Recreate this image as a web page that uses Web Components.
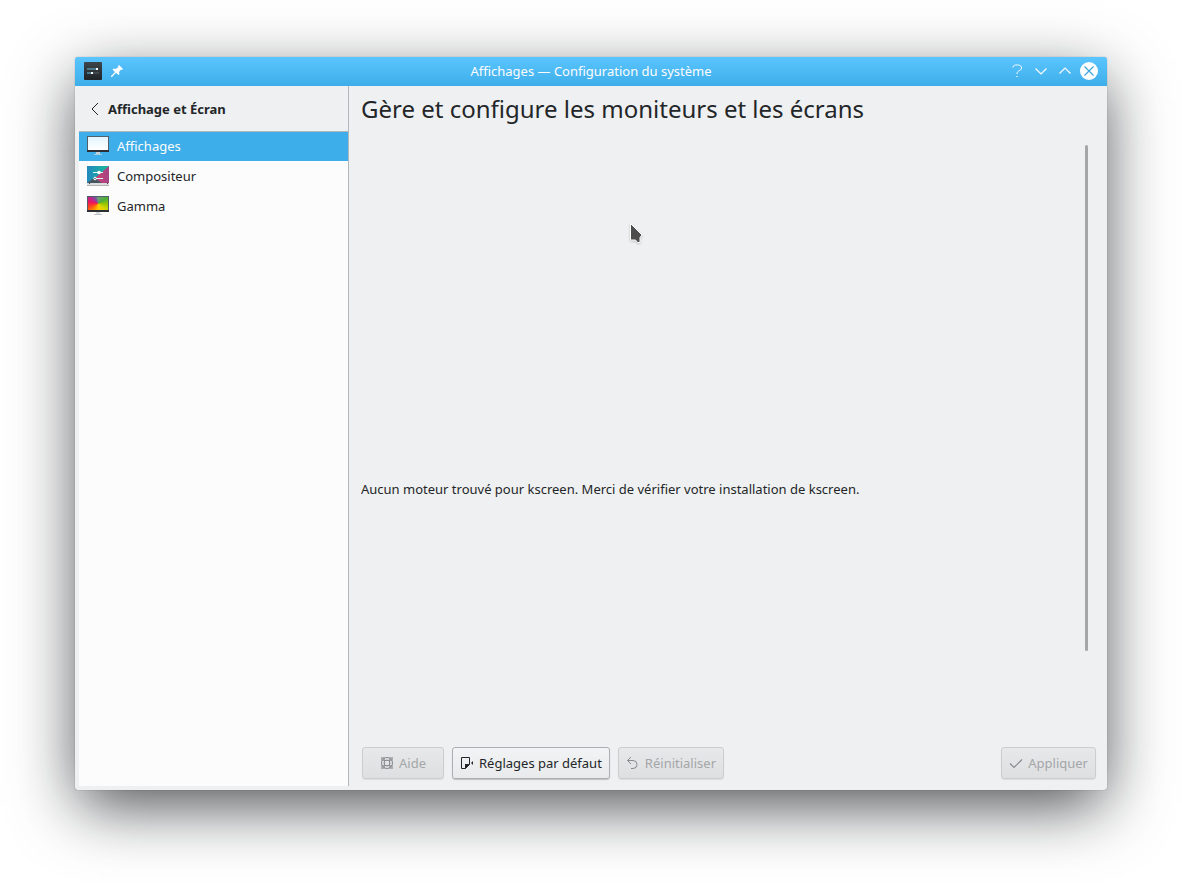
<!DOCTYPE html>
<html lang="fr">
<head>
<meta charset="utf-8">
<title>Affichages — Configuration du système</title>
<style>
html{height:100%}
body{margin:0;min-height:100%;box-sizing:border-box;padding:57px 75px 93px;display:flex;background:#fff;color:#232629;font:13px/18px "Noto Sans",sans-serif}
</style>
</head>
<body>
<settings-window>
  <title-bar slot="title">Affichages — Configuration du système</title-bar>
  <side-bar slot="side" heading="Affichage et Écran">
    <nav-item href="#affichages" icon="display" current>Affichages</nav-item>
    <nav-item href="#compositeur" icon="compositor">Compositeur</nav-item>
    <nav-item href="#gamma" icon="gamma">Gamma</nav-item>
  </side-bar>
  <module-view heading="Gère et configure les moniteurs et les écrans">
    Aucun moteur trouvé pour kscreen. Merci de vérifier votre installation de kscreen.
    <action-button slot="start" icon="help" wide disabled>Aide</action-button>
    <action-button slot="start" icon="defaults">Réglages par défaut</action-button>
    <action-button slot="start" icon="reset" disabled>Réinitialiser</action-button>
    <action-button slot="end" icon="apply" disabled>Appliquer</action-button>
  </module-view>
</settings-window>
<mouse-pointer></mouse-pointer>

<script>
const icons = {
  display: `<svg width="22" height="22" viewBox="0 0 22 22"><defs><linearGradient id="d" x2="0" y2="1"><stop stop-color="#e3f5ff"/><stop offset="1" stop-color="#fff"/></linearGradient></defs><path fill="#53606a" d="M0 1h22v14H0z"/><path fill="url(#d)" d="M1 2h20v13H1z"/><path fill="#2c3034" d="M0 15h22v2H0z"/><path fill="#c5ced4" d="M9 17h4v2H9z"/><path fill="#dce2e5" d="M7 19h8v1H7z" opacity=".6"/></svg>`,
  compositor: `<svg width="22" height="22" viewBox="0 0 22 22"><defs><linearGradient id="a" x2="1" y2="0"><stop stop-color="#2488bd"/><stop offset="1" stop-color="#19bc9b"/></linearGradient><linearGradient id="b" x2="1" y2="0"><stop stop-color="#d3406c"/><stop offset="1" stop-color="#a24586"/></linearGradient></defs><path fill="url(#a)" d="M0 1h22v17H0z"/><path fill="url(#b)" d="M22 1v17h-8l-6-5z"/><path fill="#46555d" d="M0 18l7-5 8 5z"/><path fill="#dadddf" d="M0 18h22v2H0z"/><path fill="#666" d="M0 20h22v1H0z" opacity=".5"/><path fill="#444" d="M2 18h1v1H2zM20 18h1v1h-1z"/><path d="M6 7.500h10M9 13.500h7" stroke="#dff" stroke-width="1"/><circle cx="12" cy="7.500" r="1.800" fill="#fff"/><circle cx="8" cy="13.500" r="1.300" fill="none" stroke="#fff"/></svg>`,
  gamma: `<svg width="22" height="22" viewBox="0 0 22 22"><path fill="#53606a" d="M0 1h22v14H0z"/><foreignObject x="1" y="2" width="20" height="13"><div xmlns="http://www.w3.org/1999/xhtml" style="height:13px;background:conic-gradient(#6d9d80,#4caf35 60deg,#9bc700 95deg,#d9d800 130deg,#ffc800 180deg,#ff8500 220deg,#fb3c28 255deg,#ee1263 280deg,#b32b91 310deg,#76549b 335deg,#6d9d80)"></div></foreignObject><path fill="#2c3034" d="M0 15h22v2H0z"/><path fill="#d5d8da" d="M9 17h4v2H9z"/><path fill="#bfc3c5" d="M7 19h8v1H7z"/></svg>`,
  help: `<svg width="14" height="14" viewBox="0 0 14 14" fill="none" stroke="currentColor"><circle cx="7" cy="7" r="5.500"/><circle cx="7" cy="7" r="3"/><path d="M1 1h3v3H1zM10 1h3v3h-3zM10 10h3v3h-3zM1 10h3v3H1z" fill="currentColor" stroke="none" opacity=".6"/><path d="M4.500 1.500v11M9.500 1.500v11M1.500 4.500h11M1.500 9.500h11" opacity=".7"/></svg>`,
  defaults: `<svg width="14" height="14" viewBox="0 0 14 14"><path d="M1.500 1.500h8v7l-4 4h-4z" fill="none" stroke="currentColor"/><path d="M10 8H5v5z" fill="currentColor"/><path d="M13 5v4l-2-2z" fill="currentColor"/></svg>`,
  reset: `<svg width="14" height="14" viewBox="0 0 14 14" fill="none" stroke="currentColor"><path d="M5 1L1.500 4.500 5 8M1.500 4.500H7a4 4 0 0 1 0 8H5"/></svg>`,
  apply: `<svg width="14" height="14" viewBox="0 0 14 14" fill="none" stroke="currentColor" stroke-width="1.200"><path d="M1 7.500l4 4 8-8"/></svg>`
};

class SettingsWindow extends HTMLElement {
  constructor() {
    super();
    this.attachShadow({mode: 'open'}).innerHTML = `<style>
      :host{flex:1;min-width:0;display:flex;flex-direction:column;background:#eff0f1;border-radius:3px;box-shadow:0 0 1px rgba(0,0,0,.5),0 19px 60px -4px rgba(8,12,16,.74)}
      .body{flex:1;display:flex;min-height:0}
    </style><slot name="title"></slot><div class="body"><slot name="side"></slot><slot></slot></div>`;
  }
}

class TitleBar extends HTMLElement {
  constructor() {
    super();
    this.attachShadow({mode: 'open'}).innerHTML = `<style>
      :host{display:grid;grid-template-columns:1fr auto 1fr;align-items:center;height:28px;padding:0 8px 1px;border-radius:3px 3px 0 0;background:linear-gradient(#5bc5ff,#3daee9);color:#fcfcfc}
      div{display:flex;gap:4px}
      .right{justify-content:flex-end}
      button{width:20px;height:20px;padding:0;border:0;background:none;color:inherit;display:grid;place-items:center}
      svg{display:block}
    </style>
    <div>
      <button aria-label="Menu"><svg width="18" height="18" viewBox="0 0 18 18"><defs><linearGradient id="g" x2="0" y2="1"><stop stop-color="#3d454b"/><stop offset="1" stop-color="#202427"/></linearGradient></defs><rect width="18" height="18" rx="1" fill="url(#g)"/><path d="M3 7h10" stroke="#67b8da" stroke-width="1"/><path d="M3 11h12" stroke="#566067"/><path d="M3 11h4" stroke="#4aaad2"/><path d="M12 6h2v2h-2zM7 10h2v2H7z" fill="#fff"/></svg></button>
      <button aria-label="Épingler"><svg width="12" height="12" viewBox="0 0 12 12"><path fill="#fff" d="M8 0l4 4-1 1-1-.5L8 7l.5 2-1 1L5 7.800 1 12H0v-1l4-4-2.500-2.500 1-1 2 .5L7.500 2 7 1z"/></svg></button>
    </div>
    <slot></slot>
    <div class="right">
      <button aria-label="Aide"><svg width="18" height="18" viewBox="0 0 18 18" fill="none" stroke="currentColor" stroke-width="1"><path d="M5 5.500C5 3 7 3 9 3s4.500 0 4.500 3S9 8 9 12"/><path d="M8 14.500h2" opacity=".7"/></svg></button>
      <button aria-label="Réduire"><svg width="18" height="18" viewBox="0 0 18 18" fill="none" stroke="currentColor" stroke-width="1.200"><path d="M3.500 6.500L9 12l5.500-5.500"/></svg></button>
      <button aria-label="Agrandir"><svg width="18" height="18" viewBox="0 0 18 18" fill="none" stroke="currentColor" stroke-width="1.200"><path d="M3.500 11.500L9 6l5.500 5.500"/></svg></button>
      <button aria-label="Fermer"><svg width="18" height="18" viewBox="0 0 18 18"><circle cx="9" cy="9" r="9" fill="#fff"/><path d="M4.500 4.500l9 9M13.500 4.500l-9 9" stroke="#3ba5de" stroke-width="1.200"/></svg></button>
    </div>`;
  }
}

class SideBar extends HTMLElement {
  constructor() {
    super();
    this.attachShadow({mode: 'open'}).innerHTML = `<style>
      :host{flex:0 0 270px;box-sizing:border-box;display:flex;flex-direction:column;margin:0 0 4px 4px;border-right:1px solid #b4b7b9}
      button{height:45px;padding:0 10px;border:0;background:none;color:inherit;font:inherit;font-weight:700;display:flex;align-items:center;gap:7px;text-align:left}
      nav{flex:1;border-top:1px solid #b4b7b9;background:#fcfcfc}
    </style>
    <button><svg width="12" height="14" viewBox="0 0 12 14" fill="none" stroke="currentColor"><path d="M9 1L3 7l6 6"/></svg><span></span></button>
    <nav><slot></slot></nav>`;
    this.shadowRoot.querySelector('span').textContent = this.getAttribute('heading');
  }
}

class NavItem extends HTMLElement {
  constructor() {
    super();
    this.attachShadow({mode: 'open'}).innerHTML = `<style>
      :host{display:block}
      a{display:flex;align-items:center;gap:8px;height:30px;padding:0 8px;color:inherit;text-decoration:none}
      :host([current]) a{background:#3daee9;color:#fcfcfc;height:29px;padding-bottom:1px;box-sizing:border-box}
      svg{display:block}
    </style><a href="${this.getAttribute('href')}">${icons[this.getAttribute('icon')]}<span><slot></slot></span></a>`;
  }
}

class ModuleView extends HTMLElement {
  constructor() {
    super();
    this.attachShadow({mode: 'open'}).innerHTML = `<style>
      :host{flex:1;min-width:0;display:flex;flex-direction:column;padding:6px 10px 11px 12px}
      h1{margin:0;font-size:24px;line-height:34px;font-weight:400}
      .view{flex:1;min-height:0;display:flex;margin:19px 9px 14px 0}
      .scroll{flex:1;height:100%;overflow:auto;scrollbar-width:none}
      .page{height:117%;display:flex;align-items:center}
      p{margin:0}
      .thumb{width:3px;height:86%;border-radius:2px;background:#a5a6a8}
      footer{display:flex;justify-content:space-between;padding:0 1px}
      footer div{display:flex;gap:8px}
    </style>
    <h1></h1>
    <div class="view"><div class="scroll"><div class="page"><p><slot></slot></p></div></div><div class="thumb"></div></div>
    <footer><div><slot name="start"></slot></div><div><slot name="end"></slot></div></footer>`;
    this.shadowRoot.querySelector('h1').textContent = this.getAttribute('heading');
  }
}

class ActionButton extends HTMLElement {
  constructor() {
    super();
    this.attachShadow({mode: 'open'}).innerHTML = `<style>
      :host{display:block}
      button{height:32px;padding:0 7px;border:1px solid #acafb1;border-radius:3px;background:linear-gradient(#f2f3f4,#e9eaec);box-shadow:0 1px 1px rgba(0,0,0,.2);color:#232629;font:inherit;display:flex;align-items:center;gap:5px}
      button:disabled{color:#a4a6a8;border-color:#cbcdcf;background:linear-gradient(#e7e8ea,#dedfe1);box-shadow:0 1px 1px rgba(0,0,0,.08)}
      :host([wide]) button{padding:0 17px}
      button:disabled svg{color:#888b8e}
      svg{display:block}
    </style><button ${this.hasAttribute('disabled') ? 'disabled' : ''}>${icons[this.getAttribute('icon')]}<span><slot></slot></span></button>`;
  }
}

class MousePointer extends HTMLElement {
  constructor() {
    super();
    this.attachShadow({mode: 'open'}).innerHTML = `<style>
      :host{position:absolute;left:629px;top:222px;pointer-events:none;filter:drop-shadow(0 1px 1px rgba(0,0,0,.2))}
      svg{display:block}
    </style><svg width="15" height="23" viewBox="0 0 15 23"><path d="M1.500 1.500L13 13l-2 2.500v5H8.500L6.500 18h-5z" fill="#4d4d4d" stroke="#fff"/></svg>`;
  }
}

customElements.define('settings-window', SettingsWindow);
customElements.define('title-bar', TitleBar);
customElements.define('side-bar', SideBar);
customElements.define('nav-item', NavItem);
customElements.define('module-view', ModuleView);
customElements.define('action-button', ActionButton);
customElements.define('mouse-pointer', MousePointer);
</script>
</body>
</html>
